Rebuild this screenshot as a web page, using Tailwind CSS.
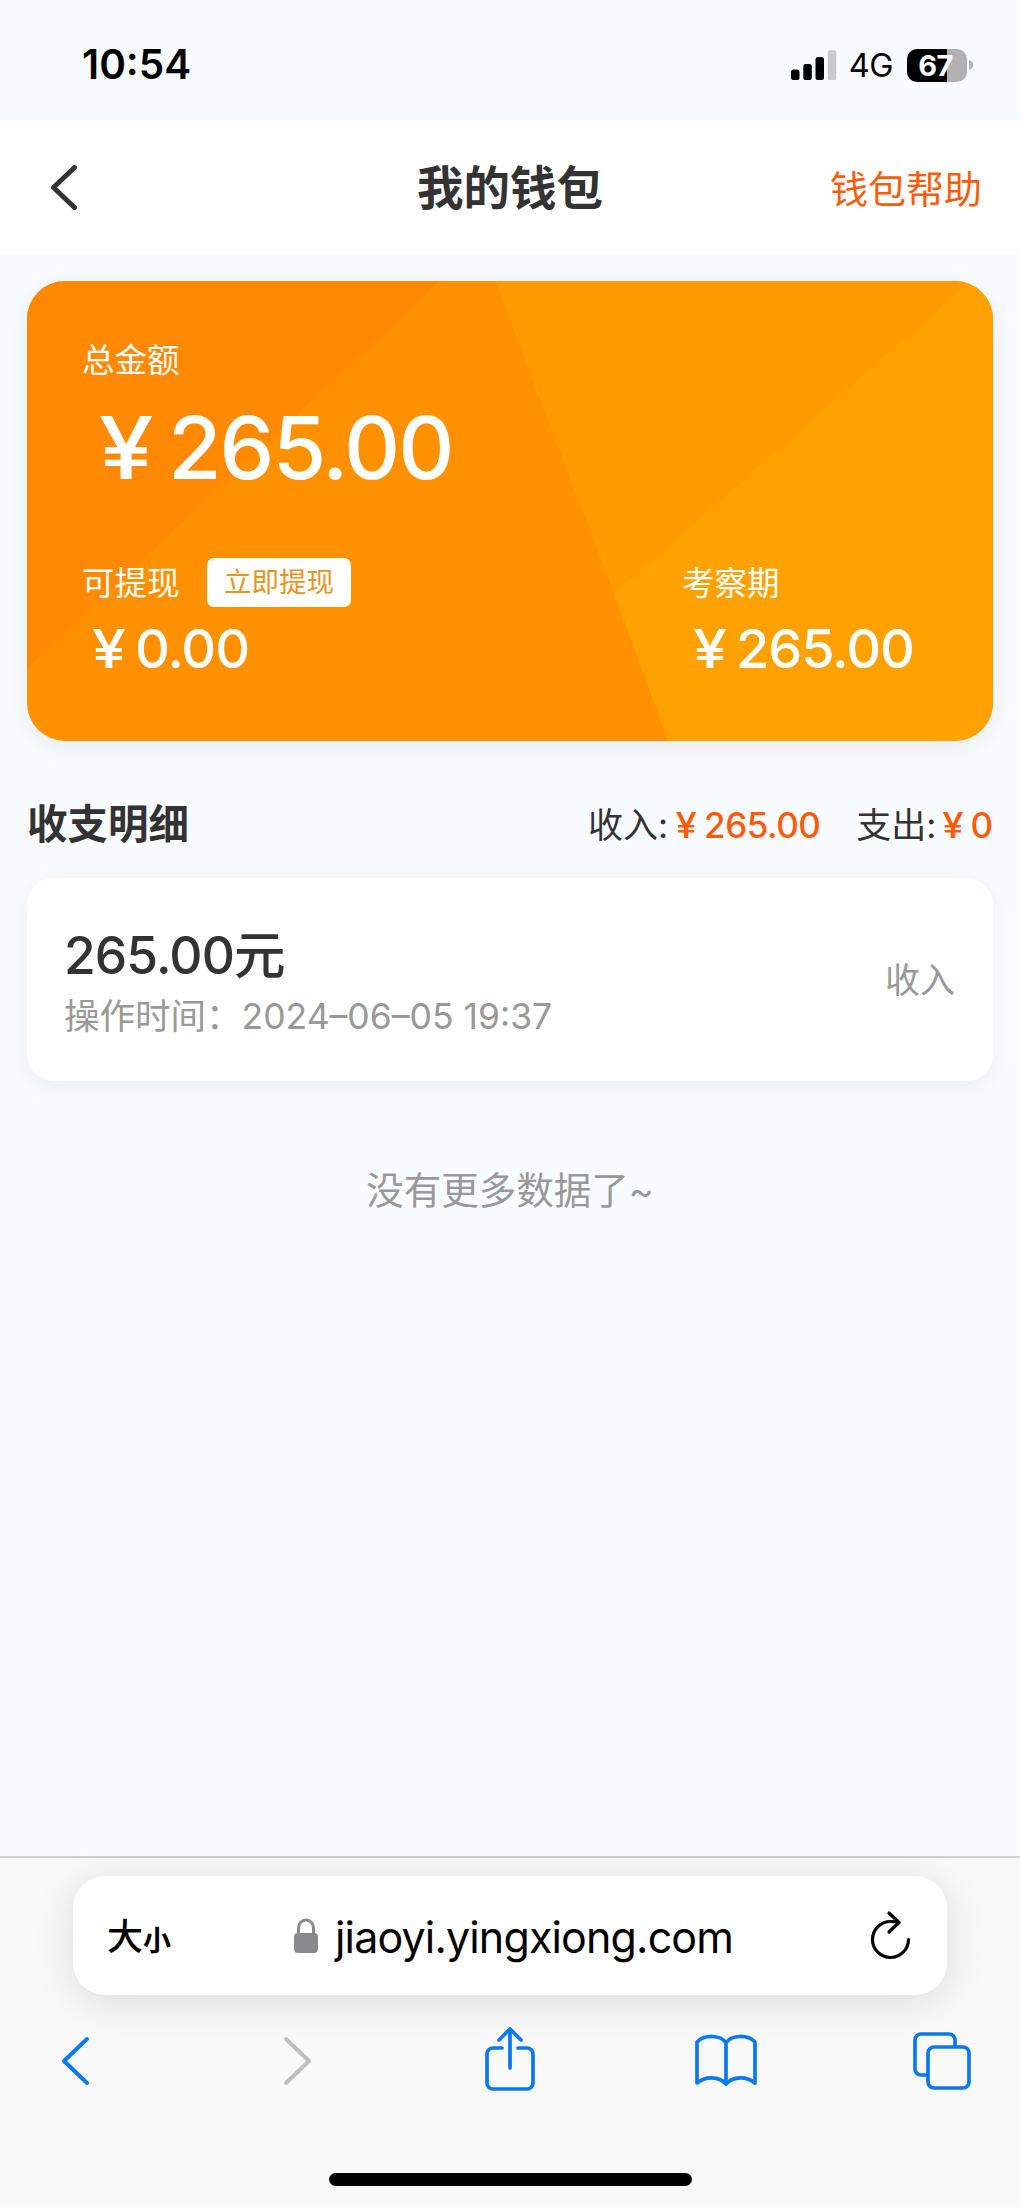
<!DOCTYPE html>
<html lang="zh-CN">
<head>
<meta charset="utf-8">
<title>我的钱包</title>
<script src="https://cdn.jsdelivr.net/npm/@tailwindcss/browser@4"></script>
</head>
<body class="bg-[#f9fcff]">
<div class="flex h-[2207px] w-[1020px] flex-col overflow-hidden bg-[#f9fcff] font-['Inter','Noto_Sans_CJK_SC',sans-serif] leading-none text-[#333] whitespace-nowrap">

  <!-- status bar -->
  <div class="flex h-[121px] shrink-0 items-center justify-between pt-[9px] pr-[47px] pl-[82px] text-black">
    <span class="mt-[1px] text-[40.500px] font-semibold">10:54</span>
    <div class="flex items-center">
      <svg class="h-[30px] w-[46px]" viewBox="0 0 46 30"><rect x="0" y="19.5" width="8.5" height="10.5" rx="2.5"/><rect x="12.300" y="14" width="8.500" height="16" rx="2.500"/><rect x="24.500" y="7" width="8.500" height="23" rx="2.500"/><rect x="36.800" y="0" width="8.500" height="30" rx="2.500" fill="#c8c8ca"/></svg>
      <span class="mt-[2px] ml-[12px] text-[32.500px] tracking-[-0.500px]">4G</span>
      <div class="ml-[14px] flex h-[33px] w-[60px] items-center justify-center overflow-hidden rounded-[10px] bg-[linear-gradient(to_right,#000_67%,#b1b1b3_67%)]">
        <span class="mr-[3px] text-[29px] font-bold tracking-[-0.500px] text-white">67</span>
      </div>
      <svg class="ml-[2px] h-[10px] w-[4px]" viewBox="0 0 4 10"><path d="M0 0Q4 1.500 4 5T0 10Z" fill="#b1b1b3"/></svg>
    </div>
  </div>

  <!-- page header -->
  <header class="grid h-[133px] shrink-0 grid-cols-[1fr_auto_1fr] items-center bg-white px-[38px]">
    <svg class="ml-[11px] h-[46px] w-[28px]" viewBox="0 0 28 46" fill="none" stroke="#333" stroke-width="5" stroke-linecap="round" stroke-linejoin="round"><path d="M25.500 2.500 4.500 22.500 25.500 42.500"/></svg>
    <h1 class="mt-[1px] text-[46.500px] font-bold">我的钱包</h1>
    <a class="mt-[2px] justify-self-end text-[38px] text-[#fa5c0c]">钱包帮助</a>
  </header>

  <main class="flex grow flex-col px-[27px] pt-[27px]">
    <!-- balance card -->
    <section class="relative h-[460px] shrink-0 rounded-[38px] text-white shadow-[0_6px_26px_rgba(0,0,0,0.07)]">
      <svg class="absolute inset-0 h-full w-full rounded-[38px]" viewBox="0 0 966 460" preserveAspectRatio="none"><rect width="966" height="460" fill="#ff9100"/><path d="M0 0H412L0 388Z" fill="#ff8903"/><path d="M468 0H943L587 312Z" fill="#ff9b00"/><path d="M587 312 943 0H966V460H641Z" fill="#ffa201"/></svg>
      <div class="relative flex h-full flex-col pt-[63px] pl-[55px]">
        <span class="text-[32.500px] leading-[34px]">总金额</span>
        <div class="mt-[26px] flex h-[86px] items-center text-[87px] font-medium tracking-[-2px]"><span class="w-[86px] scale-x-[1.130] text-center">¥</span><span>265.00</span></div>
        <div class="mt-[68px] flex h-[49px] items-center">
          <span class="mt-[3px] w-[125px] text-[32.500px]">可提现</span>
          <button class="h-[49px] w-[144px] rounded-[7px] bg-white text-[27.500px] text-[#e8931a]">立即提现</button>
          <span class="mt-[3px] ml-[331px] text-[32.500px]">考察期</span>
        </div>
        <div class="mt-[14px] flex h-[56px] items-center text-[54px] font-medium tracking-[-1px]">
          <div class="flex w-[601px]"><span class="w-[53px] scale-x-[1.130] text-center">¥</span><span>0.00</span></div>
          <div class="flex"><span class="w-[53px] scale-x-[1.130] text-center">¥</span><span>265.00</span></div>
        </div>
      </div>
    </section>

    <!-- totals -->
    <div class="mt-[59px] flex h-[50px] shrink-0 items-center justify-between">
      <h2 class="mt-[1px] text-[40.500px] font-bold">收支明细</h2>
      <div class="flex items-center text-[35px]">
        <span class="mt-[1px]">收入:</span><span class="flex font-medium tracking-[-0.500px] text-[#fa5c0c]"><span class="w-[36px] scale-x-[1.100] text-center">¥</span>265.00</span>
        <span class="mt-[1px] ml-[36px]">支出:</span><span class="flex font-medium text-[#fa5c0c]"><span class="w-[34px] scale-x-[1.100] text-center">¥</span>0</span>
      </div>
    </div>

    <!-- record -->
    <article class="mt-[28px] flex h-[203px] shrink-0 items-center justify-between rounded-[27px] bg-white pr-[38px] pl-[37px] shadow-[0_6px_26px_rgba(0,0,0,0.06)]">
      <div class="flex flex-col pt-[4px]">
        <span class="text-[51.500px] leading-[60px] font-medium tracking-[-0.900px]">265.00元</span>
        <span class="mt-[10px] text-[35.500px] leading-[44px] text-[#999]">操作时间：<span>2024–06–05 19:37</span></span>
      </div>
      <span class="mt-[2px] text-[35px] text-[#999]">收入</span>
    </article>

    <p class="mt-[87px] text-center text-[37.500px] leading-[46px] text-[#999]">没有更多数据了~</p>
  </main>

  <!-- browser toolbar -->
  <footer class="flex h-[351px] shrink-0 flex-col items-center border-t-2 border-[#d0d1d3] bg-[#f9f9fa] pt-[18px]">
    <div class="flex h-[119px] w-[874px] shrink-0 items-center rounded-[32px] bg-white pr-[36px] pl-[34px] text-black shadow-[0_6px_40px_rgba(0,0,0,0.12)]">
      <span class="mt-[3px] text-[36px] font-medium">大</span><span class="mt-[10px] text-[28px] font-bold">小</span>
      <svg class="ml-[122px] h-[36px] w-[26px]" viewBox="0 0 26 36"><rect x="1" y="15" width="24" height="20" rx="4" fill="#8a8a8e"/><path d="M5.500 17V10a7.500 8 0 0 1 15 0V17" fill="none" stroke="#8a8a8e" stroke-width="3"/></svg>
      <span class="mt-[3px] ml-[16px] text-[43px] tracking-[-0.850px]">jiaoyi.yingxiong.com</span>
      <svg class="mb-[2px] ml-auto h-[50px] w-[42px]" viewBox="0 0 42 50" fill="none" stroke="#000" stroke-width="3.200" stroke-linecap="round" stroke-linejoin="round"><path d="M39.500 29.500A18 18 0 1 1 21.500 11.500Q26 11.500 30 12.500"/><path d="M20 3 30 12.500 20 22"/></svg>
    </div>
    <nav class="mt-[30px] flex w-full shrink-0 pl-[60px] text-[#0a78ef]">
      <svg class="h-[70px] w-[30px]" viewBox="0 0 30 70" fill="none" stroke="currentColor" stroke-width="4" stroke-linecap="round" stroke-linejoin="round"><path d="M27 14 4 36 27 58"/></svg>
      <svg class="ml-[193px] h-[70px] w-[30px]" viewBox="0 0 30 70" fill="none" stroke="#bfbfc1" stroke-width="4" stroke-linecap="round" stroke-linejoin="round"><path d="M3 14 26 36 3 58"/></svg>
      <svg class="ml-[171px] h-[70px] w-[52px]" viewBox="0 0 52 70" fill="none" stroke="currentColor" stroke-width="3.700" stroke-linecap="round" stroke-linejoin="round"><path d="M18 23H9a6 6 0 0 0-6 6V58a6 6 0 0 0 6 6H43a6 6 0 0 0 6-6V29a6 6 0 0 0-6-6H34M26 43V5M15 15 26 4 37 15"/></svg>
      <svg class="ml-[158px] h-[70px] w-[64px]" viewBox="0 0 64 70" fill="none" stroke="currentColor" stroke-width="3.700" stroke-linejoin="round"><path d="M32 18C27 10 11 9 3 17V58C11 51 25 51 32 59 39 51 53 51 61 58V17C53 9 37 10 32 18V59"/></svg>
      <svg class="ml-[154px] h-[70px] w-[60px]" viewBox="0 0 60 70" fill="none" stroke="currentColor" stroke-width="3.700" stroke-linejoin="round"><rect x="16" y="22" width="41" height="41" rx="6"/><path d="M43 21V15a6 6 0 0 0-6-6H9a6 6 0 0 0-6 6V44a6 6 0 0 0 6 6H15"/></svg>
    </nav>
    <div class="mt-[78px] h-[13px] w-[363px] shrink-0 rounded-full bg-black"></div>
  </footer>
</div>
</body>
</html>
